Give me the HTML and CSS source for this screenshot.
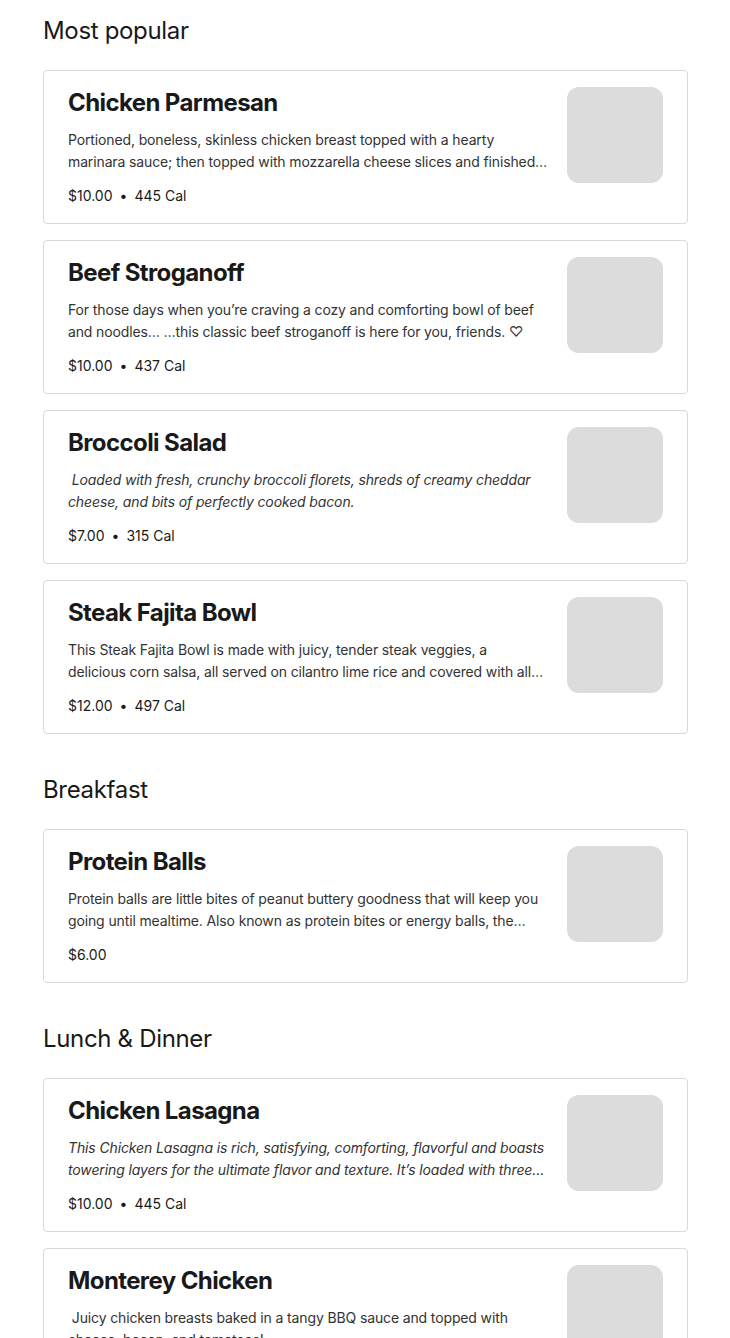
FILE: index.html
```html
<!DOCTYPE html>
<html lang="en">
<head>
<meta charset="utf-8">
<title>Menu</title>
<link rel="stylesheet" href="styles.css">
</head>
<body>
<main class="menu">
  <section class="section">
    <h2 class="section-title">Most popular</h2>
    <div class="items">
      <article class="item">
        <div class="item-text">
          <h3 class="item-name">Chicken Parmesan</h3>
          <p class="item-desc">Portioned, boneless, skinless chicken breast topped with a hearty marinara sauce; then topped with mozzarella cheese slices and finished with parmesan and baked until golden.</p>
          <p class="item-meta">$10.00<span class="dot">•</span>445 Cal</p>
        </div>
        <div class="item-img"></div>
      </article>
      <article class="item">
        <div class="item-text">
          <h3 class="item-name">Beef Stroganoff</h3>
          <p class="item-desc">For those days when you’re craving a cozy and comforting bowl of beef and noodles… …this classic beef stroganoff is here for you, friends. ♡</p>
          <p class="item-meta">$10.00<span class="dot">•</span>437 Cal</p>
        </div>
        <div class="item-img"></div>
      </article>
      <article class="item">
        <div class="item-text">
          <h3 class="item-name">Broccoli Salad</h3>
          <p class="item-desc italic">&nbsp;Loaded with fresh, crunchy broccoli florets, shreds of creamy cheddar cheese, and bits of perfectly cooked bacon.</p>
          <p class="item-meta">$7.00<span class="dot">•</span>315 Cal</p>
        </div>
        <div class="item-img"></div>
      </article>
      <article class="item">
        <div class="item-text">
          <h3 class="item-name">Steak Fajita Bowl</h3>
          <p class="item-desc">This Steak Fajita Bowl is made with juicy, tender steak veggies, a delicious corn salsa, all served on cilantro lime rice and covered with all your favorite toppings.</p>
          <p class="item-meta">$12.00<span class="dot">•</span>497 Cal</p>
        </div>
        <div class="item-img"></div>
      </article>
    </div>
  </section>

  <section class="section">
    <h2 class="section-title">Breakfast</h2>
    <div class="items">
      <article class="item">
        <div class="item-text">
          <h3 class="item-name">Protein Balls</h3>
          <p class="item-desc">Protein balls are little bites of peanut buttery goodness that will keep you going until mealtime. Also known as protein bites or energy balls, the perfect snack for busy days.</p>
          <p class="item-meta">$6.00</p>
        </div>
        <div class="item-img"></div>
      </article>
    </div>
  </section>

  <section class="section">
    <h2 class="section-title">Lunch &amp; Dinner</h2>
    <div class="items">
      <article class="item">
        <div class="item-text">
          <h3 class="item-name">Chicken Lasagna</h3>
          <p class="item-desc italic">This Chicken Lasagna is rich, satisfying, comforting, flavorful and boasts towering layers for the ultimate flavor and texture. It’s loaded with three kinds of cheese.</p>
          <p class="item-meta">$10.00<span class="dot">•</span>445 Cal</p>
        </div>
        <div class="item-img"></div>
      </article>
      <article class="item">
        <div class="item-text">
          <h3 class="item-name">Monterey Chicken</h3>
          <p class="item-desc">&nbsp;Juicy chicken breasts baked in a tangy BBQ sauce and topped with cheese, bacon, and tomatoes!</p>
          <p class="item-meta">$11.00<span class="dot">•</span>520 Cal</p>
        </div>
        <div class="item-img"></div>
      </article>
    </div>
  </section>
</main>
</body>
</html>
```

FILE: styles.css
```css
* { box-sizing: border-box; }

html, body {
  margin: 0;
  padding: 0;
  background: #ffffff;
}

body {
  font-family: Inter, "Noto Sans", "Liberation Sans", sans-serif;
  color: #191919;
}

.menu {
  padding: 15px 42px 40px 43px;
  display: flex;
  flex-direction: column;
  gap: 40px;
}

.section-title {
  margin: 0 0 23px;
  font-size: 24px;
  line-height: 32px;
  font-weight: 400;
  letter-spacing: -0.33px;
  color: #191919;
}

.items {
  display: flex;
  flex-direction: column;
  gap: 16px;
}

.item {
  display: flex;
  gap: 19px;
  border: 1px solid #d9d9d9;
  border-radius: 4px;
  padding: 16px 24px;
  background: #fff;
}

.item-text {
  flex: 1;
  min-width: 0;
}

.item-name {
  margin: 0;
  font-size: 24px;
  line-height: 32px;
  font-weight: 700;
  letter-spacing: -0.6px;
  color: #191919;
}

.item-desc {
  margin: 10px 0 0;
  font-size: 14px;
  line-height: 22px;
  letter-spacing: -0.13px;
  color: #333333;
  display: -webkit-box;
  -webkit-line-clamp: 2;
  -webkit-box-orient: vertical;
  overflow: hidden;
}

.item-desc.italic { font-style: italic; }

.item-meta {
  margin: 12px 0 0;
  font-size: 14px;
  line-height: 22px;
  color: #191919;
}

.dot {
  margin: 0 7px;
}

.item-img {
  flex: 0 0 96px;
  width: 96px;
  height: 96px;
  border-radius: 12px;
  background: #dcdcdc;
}
```
